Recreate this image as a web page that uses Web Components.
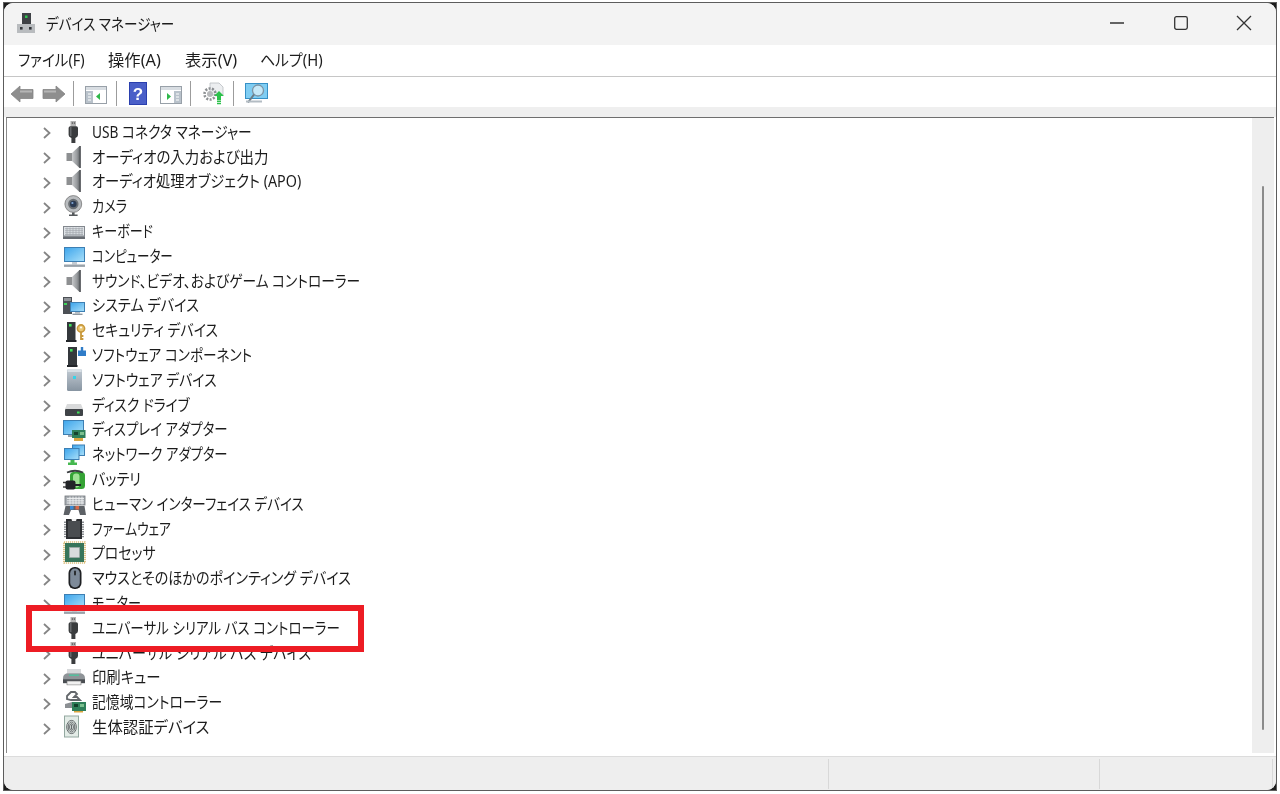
<!DOCTYPE html>
<html lang="ja">
<head>
<meta charset="utf-8">
<title>デバイス マネージャー</title>
<style>
html,body{margin:0;padding:0;background:#fff;height:100%;overflow:hidden}
body{font-family:"Noto Sans","Noto Sans CJK JP",sans-serif;color:#1c1c1c}
</style>
</head>
<body>
<dm-window>
  <dm-titlebar slot="title">デバイス マネージャー</dm-titlebar>
  <dm-menubar slot="menu">
    <dm-menu style="width:90px;--s:.91">ファイル(F)</dm-menu>
    <dm-menu style="width:77px;--s:1.02">操作(A)</dm-menu>
    <dm-menu style="width:75px;--s:1.02">表示(V)</dm-menu>
    <dm-menu style="width:70px;--s:.93">ヘルプ(H)</dm-menu>
  </dm-menubar>
  <dm-toolbar slot="toolbar"></dm-toolbar>
  <dm-tree slot="tree">
    <dm-row icon="usb" style="--s:.857">USB コネクタ マネージャー</dm-row>
    <dm-row icon="speaker" style="--s:.902">オーディオの入力および出力</dm-row>
    <dm-row icon="speaker" style="--s:.895">オーディオ処理オブジェクト (APO)</dm-row>
    <dm-row icon="camera" style="--s:.82">カメラ</dm-row>
    <dm-row icon="keyboard" style="--s:.817">キーボード</dm-row>
    <dm-row icon="computer" style="--s:.781">コンピューター</dm-row>
    <dm-row icon="speaker" style="--s:.858">サウンド、ビデオ、およびゲーム コントローラー</dm-row>
    <dm-row icon="system" style="--s:.888">システム デバイス</dm-row>
    <dm-row icon="security" style="--s:.869">セキュリティ デバイス</dm-row>
    <dm-row icon="swcomp" style="--s:.852">ソフトウェア コンポーネント</dm-row>
    <dm-row icon="swdev" style="--s:.868">ソフトウェア デバイス</dm-row>
    <dm-row icon="disk" style="--s:.859">ディスク ドライブ</dm-row>
    <dm-row icon="display" style="--s:.838">ディスプレイ アダプター</dm-row>
    <dm-row icon="network" style="--s:.833">ネットワーク アダプター</dm-row>
    <dm-row icon="battery" style="--s:.883">バッテリ</dm-row>
    <dm-row icon="hid" style="--s:.846">ヒューマン インターフェイス デバイス</dm-row>
    <dm-row icon="firmware" style="--s:.796">ファームウェア</dm-row>
    <dm-row icon="cpu" style="--s:.869">プロセッサ</dm-row>
    <dm-row icon="mouse" style="--s:.88">マウスとそのほかのポインティング デバイス</dm-row>
    <dm-row icon="computer" style="--s:.82">モニター</dm-row>
    <dm-row icon="usb" style="--s:.845">ユニバーサル シリアル バス コントローラー</dm-row>
    <dm-row icon="usb" style="--s:.881">ユニバーサル シリアル バス デバイス</dm-row>
    <dm-row icon="printer" style="--s:.898">印刷キュー</dm-row>
    <dm-row icon="storage" style="--s:.864">記憶域コントローラー</dm-row>
    <dm-row icon="bio" style="--s:.962">生体認証デバイス</dm-row>
  </dm-tree>
  <dm-statusbar slot="status"></dm-statusbar>
</dm-window>
<script>
const FONT='"Noto Sans","Noto Sans CJK JP",sans-serif';
const tower=(x,y,w,h)=>`<rect x="${x}" y="${y}" width="${w}" height="${h}" fill="#34383c"/><rect x="${x+1}" y="${y+h-1}" width="${w-2}" height="1" fill="#15171a"/><rect x="${x+2}" y="${y+2}" width="2.6" height="2.6" fill="#3fe05a"/>`;
const monitor=(x,y,w,h)=>`<rect x="${x}" y="${y}" width="${w}" height="${h}" fill="#3d7fb3"/><rect x="${x+1}" y="${y+1}" width="${w-2}" height="${h-2}" fill="url(#scr)"/>`;
const DEFS=`<defs>
<linearGradient id="scr" x1="0" y1="0" x2="1" y2="1"><stop offset="0" stop-color="#3fa6ec"/><stop offset="1" stop-color="#a6def9"/></linearGradient>
<linearGradient id="cone" x1="0" y1="0" x2="1" y2="0"><stop offset="0" stop-color="#c6c8ca"/><stop offset=".6" stop-color="#96999c"/><stop offset="1" stop-color="#55595c"/></linearGradient>
<linearGradient id="steel" x1="0" y1="0" x2="0" y2="1"><stop offset="0" stop-color="#c3ccd4"/><stop offset="1" stop-color="#8794a1"/></linearGradient>
</defs>`;
const ICONS={
usb:`<rect x="8.500" y="1" width="5.500" height="5.500" fill="#b4b4b4"/><rect x="9.800" y="2.400" width="1.100" height="1.300" fill="#444"/><rect x="11.800" y="2.400" width="1.100" height="1.300" fill="#444"/><path d="M6.600 8 Q6.600 6.200 8.400 6.200 H14.200 Q16 6.200 16 8 V15 Q16 17 13.400 18 V23 H9.400 V18 Q6.600 17 6.600 15 Z" fill="#3a3c3e"/><rect x="8" y="7" width="1.500" height="9" fill="#66696c"/>`,
speaker:`<rect x="4.500" y="8" width="5.500" height="8" fill="#8d8f91"/><path d="M10 8 L17.500 1 H18.500 V23 H17.500 L10 16 Z" fill="url(#cone)"/><rect x="17.500" y="1" width="1.200" height="22" fill="#4d5154"/>`,
camera:`<circle cx="11.300" cy="10" r="8.400" fill="#b9bcbf" stroke="#777" stroke-width=".8"/><circle cx="11.300" cy="10" r="5.200" fill="#6b7075"/><circle cx="11.300" cy="10" r="3.300" fill="#2b3a52"/><circle cx="10.400" cy="9" r="1.100" fill="#7ea5d6"/><path d="M10 18.500 h2.600 v2 h3 v1.600 h-8.600 v-1.600 h3z" fill="#55595c"/>`,
keyboard:`<rect x="1" y="7" width="22" height="13" fill="#83888e"/><rect x="2" y="8" width="20" height="8.500" fill="#dfe3e7"/><path d="M3 9.700h18M3 11.700h18M3 13.700h18M3 15.500h18" stroke="#a1a6ac" stroke-width=".8"/><path d="M5 8.500v8M8 8.500v8M11 8.500v8M14 8.500v8M17 8.500v8M20 8.500v8" stroke="#a1a6ac" stroke-width=".7"/><rect x="1" y="18" width="22" height="2" fill="#676c72"/>`,
computer:`${monitor(2,3,21,15)}<rect x="10" y="18" width="5" height="2.500" fill="#c6ccd2"/><rect x="2" y="20.500" width="21" height="2.400" fill="#9aa2aa"/>`,
system:`<rect x="1" y="4" width="9" height="17" fill="#4c5055"/><rect x="2" y="5" width="7" height="3" fill="#8f9398"/><rect x="2" y="10" width="3" height="2" fill="#3fd45a"/>${monitor(8,9,15,10)}<rect x="13" y="19" width="5" height="1.600" fill="#b6bdc4"/><rect x="10.500" y="20.600" width="10" height="1.400" fill="#8f98a0"/>`,
security:`${tower(5,4,8.500,19)}<rect x="4" y="22" width="10.500" height="2" fill="#23262a"/><circle cx="19" cy="10.500" r="3.600" fill="#e9c878" stroke="#c8983a" stroke-width="1.600"/><circle cx="19" cy="9.500" r="1" fill="#fff"/><path d="M19 14 V22 M19 18 h2.400 M19 21 h2.400" stroke="#c8983a" stroke-width="1.800"/>`,
swcomp:`${tower(6,4,9,19)}<rect x="5" y="22" width="10.500" height="2" fill="#23262a"/><path d="M16 7.500 h2.800 v-3.500 h2.400 v3.500 h2.800 v5.500 h-8z" fill="#2f7cc8"/>`,
swdev:`<rect x="5" y="1" width="15" height="22" rx="1.500" fill="url(#steel)"/><rect x="5.500" y="1" width="14" height="3" fill="#d8dfe5"/><rect x="11" y="8" width="3" height="3" fill="#35d3e8"/>`,
disk:`<path d="M5 11 H19 L21 16 H3 Z" fill="#d9dadb"/><rect x="3" y="16" width="18" height="7" rx="1" fill="#3f4347"/><rect x="15" y="18.500" width="2.600" height="2" fill="#3fe05a"/>`,
display:`${monitor(1,3,21,15)}<rect x="6" y="18" width="5" height="2" fill="#9aa2aa"/><rect x="10" y="13" width="13.500" height="8" fill="#2f7f5a"/><rect x="12" y="15" width="4" height="3" fill="#16432f"/><rect x="18" y="15" width="4" height="3" fill="#7cc08f"/><path d="M12 21h9v3h-9z" fill="#d9a53f"/>`,
network:`${monitor(10,2.500,13,11.500)}${monitor(2,6,15.500,12)}<path d="M6 23 h9 v-2.500 h-2.500 v-2.500 h-4 v2.500 H6z" fill="#45b84f"/>`,
battery:`<rect x="8" y="5" width="15" height="17" rx="3.500" fill="#35a335"/><rect x="11" y="6.500" width="6.500" height="14" rx="3" fill="#9fe294"/><path d="M5 5.500 Q13 2 21 5.500" stroke="#3a3d40" stroke-width="1.800" fill="none"/><path d="M1 15.500 h4 M1 20 h4" stroke="#444" stroke-width="1.500"/><rect x="3.500" y="13.500" width="10" height="9" rx="2" fill="#232528"/><path d="M13 18 h6" stroke="#232528" stroke-width="2.200"/>`,
hid:`<rect x="3" y="4" width="20" height="9" fill="#a9aeb3" stroke="#70757a" stroke-width=".8"/><path d="M5 6.500h17M5 8.800h17M5 11h17M8 4.500v8M11 4.500v8M14 4.500v8M17 4.500v8M20 4.500v8" stroke="#eef0f2" stroke-width=".9"/><path d="M1.500 23 L3.500 14 H22.500 L24 23 H18 L16.500 18 H9 L7 23 Z" fill="#5d6166"/><rect x="8" y="14" width="3.500" height="3.500" fill="#3a8ad6"/><rect x="13.500" y="14" width="3.500" height="3.500" fill="#d96a4a"/>`,
firmware:`<rect x="4" y="2" width="16" height="20" fill="#2d2f32"/><path d="M9.500 2 a2.500 2.500 0 0 0 5 0z" fill="#f2f2f2"/><rect x="6" y="4" width="12" height="16" fill="#4a4d50"/><path d="M3 4.500v16M21 4.500v16" stroke="#8b8f93" stroke-width="2" stroke-dasharray="1.400 1"/>`,
cpu:`<rect x="2" y="1" width="21" height="21" fill="none" stroke="#c79b39" stroke-width="1.200" stroke-dasharray="1.200 .8"/><rect x="3" y="2" width="19" height="19" fill="#37755a"/><rect x="7.500" y="6.500" width="10" height="10" fill="#d9dcdc" stroke="#a5aaa9" stroke-width=".6"/>`,
mouse:`<rect x="6.500" y="1" width="13" height="22" rx="6" fill="#1e2023"/><rect x="8.200" y="2.600" width="9.600" height="18.800" rx="4.600" fill="#7d8a99"/><rect x="12" y="4.500" width="2" height="5" rx="1" fill="#2a2d30"/>`,
printer:`<g transform="translate(0 4) scale(1 .86)"><rect x="5" y="0" width="14" height="5" fill="#d6d8da"/><path d="M1 11 Q1 6 5 5 H19 Q23 6 23 11 V16 H1 Z" fill="#8f9498"/><rect x="7" y="6.500" width="10" height="1.300" fill="#3fd0a0"/><rect x="1" y="12" width="22" height="4.500" fill="#4a4e52"/><rect x="5" y="14" width="14" height="4.500" fill="#f1f1f1" stroke="#777" stroke-width=".6"/></g>`,
storage:`<path d="M5 6 l4-4 h4 l2 2 -3 3 h3 l3 3 h-9 l-4-1z" fill="none" stroke="#63676b" stroke-width="1.800"/><path d="M3 14 l7-2 7 2 v4 H3z" fill="#8b8f93"/><rect x="10" y="12" width="14" height="9" fill="#2f7f5a"/><rect x="12" y="14" width="4" height="3" fill="#12402c"/><rect x="18" y="14" width="4" height="3" fill="#7cc08f"/><path d="M12 21h9v1.600h-9z" fill="#d9a53f"/>`,
bio:`<rect x="2.500" y="1" width="14" height="21" fill="#e3ece7" stroke="#93a8a0" stroke-width="1"/><g fill="none" stroke="#55595c" stroke-width=".9"><ellipse cx="9.500" cy="12" rx="4.800" ry="6.600"/><ellipse cx="9.500" cy="12" rx="3.300" ry="5"/><ellipse cx="9.500" cy="12" rx="1.900" ry="3.400"/><path d="M9.500 9.500v5"/></g>`
};
function def(name,cls){customElements.define(name,cls)}
class Base extends HTMLElement{
  constructor(html){super();this.attachShadow({mode:'open'}).innerHTML=html}
}
def('dm-window',class extends Base{constructor(){super(`<style>
:host{display:block;box-sizing:border-box;position:fixed;inset:2px 3px 3px 3px;background:#1d1d1d;border:1px solid #5c5c5c;font-family:${FONT}}
.in{height:100%;box-sizing:border-box;display:flex;flex-direction:column;border-radius:9px;overflow:hidden;background:#f0f0f0;filter:blur(.45px)}
.tree{flex:1;min-height:0;display:flex;padding:0 2.500px 3px 2px;background:#fff}
</style><div class="in"><slot name="title"></slot><slot name="menu"></slot><slot name="toolbar"></slot><div class="tree"><slot name="tree"></slot></div><slot name="status"></slot></div>`)}});
def('dm-titlebar',class extends Base{constructor(){super(`<style>
:host{display:flex;align-items:center;height:42px;flex:none;background:#f3f3f3;padding:0 0 2px 12px;box-sizing:border-box;font-size:15.500px;font-feature-settings:"palt";color:#1c1c1c}
svg{display:block}.ic{margin-right:9.500px}.t{flex:1;white-space:nowrap}
.x{display:inline-block;transform:scaleX(.876);transform-origin:0 50%}
.b{width:63.500px;height:40px;display:flex;align-items:center;justify-content:center;flex:none}
</style><svg class="ic" width="20" height="22" viewBox="0 0 20 22"><rect x="6" y="1" width="9" height="11" fill="#3e4145"/><rect x="9" y="3.500" width="2.500" height="2.500" fill="#2fc750"/><rect x="1" y="12" width="18" height="9" fill="#b9bcbf"/><rect x="4" y="15" width="2.600" height="2.600" fill="#33363a"/><rect x="13" y="15" width="2.600" height="2.600" fill="#33363a"/></svg><span class="t"><span class="x"><slot></slot></span></span>
<span class="b"><svg width="16" height="16" viewBox="0 0 16 16"><path d="M1 8h14" stroke="#333" stroke-width="1.300"/></svg></span>
<span class="b"><svg width="16" height="16" viewBox="0 0 16 16"><rect x="1.700" y="1.700" width="12.600" height="12.600" rx="1.800" fill="none" stroke="#333" stroke-width="1.300"/></svg></span>
<span class="b"><svg width="16" height="16" viewBox="0 0 16 16"><path d="M1 1L15 15M15 1L1 15" stroke="#333" stroke-width="1.300"/></svg></span>`)}});
def('dm-menubar',class extends Base{constructor(){super(`<style>
:host{display:flex;align-items:center;height:32px;flex:none;background:#fff;padding:0 0 3px 13.500px;box-sizing:border-box;border-bottom:1.500px solid #c6c6c6;font-size:16px;font-feature-settings:"palt"}
</style><slot></slot>`)}});
def('dm-menu',class extends Base{constructor(){super(`<style>:host{display:block;white-space:nowrap;flex:none}span{display:inline-block;transform:scaleX(var(--s,1));transform-origin:0 50%}</style><span><slot></slot></span>`)}});
def('dm-toolbar',class extends Base{constructor(){
const sep='<i class="s"></i>';
super(`<style>
:host{display:block;flex:none;background:#fff}
.bar{height:30px;box-sizing:border-box;padding:3px 0 0 6px;display:flex;align-items:center;background:#fff}
.band{height:10px;background:#efefef}
svg{display:block;flex:none;overflow:visible}
.s{display:block;width:1px;height:25px;background:#9c9c9c;flex:none}
</style><div class="bar">
<svg width="24" height="20" viewBox="0 0 24 20" style="margin-right:8px"><path d="M1 10L10 2V5.500H23V14.500H10V18Z" fill="#8e8e8e" stroke="#858585" stroke-width=".8"/><path d="M10 7.500H22" stroke="#b5b5b5" stroke-width="2"/></svg>
<svg width="24" height="20" viewBox="0 0 24 20" style="margin-right:7px"><path d="M23 10L14 2V5.500H1V14.500H14V18Z" fill="#8e8e8e" stroke="#858585" stroke-width=".8"/><path d="M2 7.500H14" stroke="#b5b5b5" stroke-width="2"/></svg>
${sep}
<svg width="22" height="18" viewBox="0 0 22 18" style="margin:3px 9px 0 11px"><rect x=".5" y=".5" width="21" height="17" fill="#fff" stroke="#98a0a8"/><rect x="1" y="1" width="20" height="3" fill="#d8dde2"/><rect x="1" y="5" width="7" height="12" fill="#b9c2cb"/><path d="M3 8h3M3 11h3M3 14h3" stroke="#fff" stroke-width="1.200"/><path d="M15 7v7l-4-3.500z" fill="#2fb84a"/></svg>
${sep}
<svg width="18" height="23" viewBox="0 0 18 23" style="margin:0 13px 0 12px"><rect width="18" height="23" fill="#2a3fae"/><rect x="1" y="1" width="16" height="21" fill="#4a5fc8"/><text x="9" y="18" font-family="Liberation Sans" font-size="17" font-weight="700" text-anchor="middle" fill="#fff">?</text></svg>
<svg width="22" height="18" viewBox="0 0 22 18" style="margin:3px 8px 0 0"><rect x=".5" y=".5" width="21" height="17" fill="#fff" stroke="#98a0a8"/><rect x="1" y="1" width="20" height="3" fill="#d8dde2"/><rect x="14" y="5" width="7" height="12" fill="#b9c2cb"/><path d="M16 8h3M16 11h3M16 14h3" stroke="#fff" stroke-width="1.200"/><path d="M7 7v7l4-3.500z" fill="#2fb84a"/></svg>
${sep}
<svg width="24" height="23" viewBox="0 0 24 23" style="margin:0 7px 0 11px"><path d="M8 1h9l4 4v8H8z" fill="#eceef0" stroke="#b9bcc0" stroke-width=".8"/><circle cx="8" cy="12" r="5.500" fill="none" stroke="#8c8f92" stroke-width="2.600" stroke-dasharray="2 1.400"/><circle cx="8" cy="12" r="3" fill="#b7b9bb"/><path d="M17 9l5 5h-3v4h-4v-4h-3z" fill="#2cc14b"/><path d="M15 19.200h4M15 21.500h4" stroke="#2cc14b" stroke-width="1.500"/></svg>
${sep}
<svg width="23" height="21" viewBox="0 0 23 21" style="margin-left:11px"><rect x=".5" y=".5" width="22" height="15" fill="#7fcdf3" stroke="#3690c6"/><circle cx="13" cy="7.500" r="5.500" fill="#c5e8f8" stroke="#7c95a6" stroke-width="1.300"/><path d="M9 11.500L3 19.500" stroke="#6b7b85" stroke-width="2"/><path d="M1 18.500h16" stroke="#b3bcc3" stroke-width="2"/></svg>
</div><div class="band"></div>`)}});
def('dm-tree',class extends Base{constructor(){super(`<style>
:host{display:block;flex:1;min-width:0;box-sizing:border-box;background:#fff;border-top:1.500px solid #6e6e6e;border-left:1.500px solid #8a8a8a;position:relative;overflow:hidden}
.wrap{display:flex;height:100%}
.list{flex:1;min-width:0;padding-top:1.500px;display:grid;grid-auto-rows:24.800px;align-content:start;overflow:hidden}
.sb{width:21.500px;flex:none;background:#eeeeee;display:flex;justify-content:center;padding-top:68px;padding-bottom:23px;box-sizing:border-box}
.th{width:2.500px;background:#8b8b8b;height:100%;border-radius:1px}
.mark{position:absolute;left:19px;top:487px;width:338px;height:47px;box-sizing:border-box;border:6px solid #ed1c24;pointer-events:none}
</style><div class="wrap"><div class="list"><slot></slot></div><div class="sb"><div class="th"></div></div></div><div class="mark"></div>`);
}});
def('dm-row',class extends Base{
 constructor(){super('')}
 connectedCallback(){
  const ic=ICONS[this.getAttribute('icon')]||'';
  this.shadowRoot.innerHTML=`<style>
:host{display:grid;grid-template-columns:8px 24px auto;align-items:center;height:24.800px;padding-left:35.500px;font-size:16px;font-feature-settings:"palt";white-space:nowrap;color:#1c1c1c}
svg{display:block;overflow:visible}
.c{margin-top:3px}
.i{margin-left:11.500px}
.t{margin-left:17.500px;display:inline-block;line-height:24px;transform:scaleX(var(--s,1));transform-origin:0 50%}
</style><svg class="c" width="8" height="12" viewBox="0 0 8 12"><path d="M1 1l5.500 5-5.500 5" fill="none" stroke="#858585" stroke-width="1.800"/></svg><svg class="i" width="24" height="24" viewBox="0 0 24 24">${DEFS}${ic}</svg><span class="t"><slot></slot></span>`;
 }
});
def('dm-statusbar',class extends Base{constructor(){super(`<style>
:host{display:grid;grid-template-columns:825px 271px 1fr;flex:none;height:34px;background:#eeeeee;border-top:1.500px solid #dcdcdc;box-sizing:border-box;padding:1.500px 3px 1px 0}
i{display:block;border-right:1.500px solid #d8d8d8}
</style><i></i><i></i><i></i>`)}});
</script>
</body>
</html>
